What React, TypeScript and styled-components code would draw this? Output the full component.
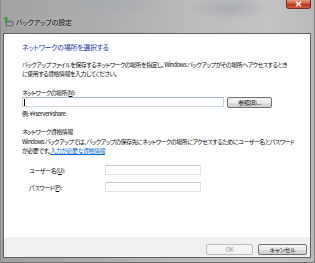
import * as React from "react";
import styled, { createGlobalStyle } from "styled-components";

const GlobalStyle = createGlobalStyle`
  html, body {
    margin: 0;
    padding: 0;
  }
  body {
    width: 315px;
    height: 263px;
    overflow: hidden;
    font-family: "Noto Sans CJK JP", "Noto Sans", sans-serif;
    font-feature-settings: "palt";
    color: #0c0c0c;
  }
`;

const Window = styled.div`
  width: 315px;
  height: 263px;
  box-sizing: border-box;
  display: flex;
  flex-direction: column;
  padding: 0 4px 5px 3px;
  background:
    radial-gradient(ellipse 60px 14px at 110px 4px, rgba(150, 160, 175, 0.35), transparent),
    radial-gradient(ellipse 40px 12px at 230px 8px, rgba(120, 130, 150, 0.3), transparent),
    linear-gradient(to right, #a2a2a2 0%, #acacac 30%, #bababa 60%, #c3c3c3 85%, #b9b9b9 100%);
  box-shadow: inset 1px 0 0 #8a8a8a, inset -1px 0 0 #7d7d7d, inset 0 -1px 0 #6e6e6e;
`;

const TitleBar = styled.div`
  height: 33px;
  display: flex;
  align-items: flex-start;
  padding-left: 1px;
`;

const TitleLabel = styled.div`
  display: flex;
  align-items: center;
  gap: 2px;
  margin-top: 17px;
  font-size: 7px;
  line-height: 10px;
  letter-spacing: -0.2px;
  color: #0a0a0a;
  text-shadow: 0 0 4px rgba(255, 255, 255, 0.7);
`;

const CloseButton = styled.div`
  margin-left: auto;
  width: 25px;
  height: 9px;
  box-sizing: border-box;
  border: 1px solid #7a2a1c;
  border-top: none;
  border-radius: 0 0 3px 3px;
  background: linear-gradient(#e39a86 0%, #cf5a3e 45%, #b8341c 55%, #d45c3e 100%);
  display: flex;
  align-items: center;
  justify-content: center;
`;

const Client = styled.div`
  flex: 1;
  display: flex;
  flex-direction: column;
  border: 1px solid #5f5f5f;
`;

const Body = styled.div`
  flex: 1;
  background: #ffffff;
  padding: 8px 0 0 18px;
  display: flex;
  flex-direction: column;
`;

const Heading = styled.div`
  font-size: 7px;
  line-height: 10px;
  letter-spacing: -0.3px;
  color: #1c3c9c;
`;

const Text = styled.div<{ $top?: number }>`
  font-size: 6px;
  line-height: 9px;
  letter-spacing: -0.5px;
  margin-top: ${(p) => p.$top ?? 0}px;
  white-space: nowrap;
`;

const Key = styled.span`
  text-decoration: underline;
`;

const Link = styled.a`
  color: #0066cc;
  text-decoration: underline;
`;

const LocationRow = styled.div`
  display: flex;
  align-items: center;
  gap: 3px;
  height: 10px;
`;

const Field = styled.div<{ $width: number; $focused?: boolean }>`
  width: ${(p) => p.$width}px;
  height: 10px;
  box-sizing: border-box;
  background: #ffffff;
  border: 1px solid ${(p) => (p.$focused ? "#c5d5e6" : "#dfe3e8")};
  border-top-color: ${(p) => (p.$focused ? "#a9b8cc" : "#c3c8ce")};
  display: flex;
  align-items: center;
  padding-left: 1px;
`;

const Caret = styled.span`
  width: 1px;
  height: 7px;
  background: #000000;
`;

const Button = styled.div<{ $width: number; $disabled?: boolean }>`
  width: ${(p) => p.$width}px;
  height: 11px;
  box-sizing: border-box;
  border: 1px solid ${(p) => (p.$disabled ? "#b8bcc0" : "#707070")};
  border-radius: 2px;
  background: ${(p) =>
    p.$disabled
      ? "#f4f4f4"
      : "linear-gradient(#f3f3f3 0%, #ebebeb 50%, #dddddd 51%, #cfcfcf 100%)"};
  color: ${(p) => (p.$disabled ? "#9a9a9a" : "#0c0c0c")};
  font-size: 6px;
  line-height: 9px;
  letter-spacing: -0.3px;
  display: flex;
  align-items: center;
  justify-content: center;
`;

const CredGrid = styled.div`
  display: grid;
  grid-template-columns: 76px 96px;
  row-gap: 7px;
  align-items: center;
  margin-top: 10px;
  padding-left: 7px;
`;

const FieldLabel = styled.div`
  font-size: 6px;
  line-height: 9px;
  letter-spacing: -0.4px;
  white-space: nowrap;
`;

const Footer = styled.div`
  height: 20px;
  background: #f0f0f0;
  display: flex;
  justify-content: flex-end;
  align-items: flex-start;
  gap: 5px;
  padding: 7px 3px 0 0;
  box-sizing: border-box;
`;

function BackupIcon() {
  return (
    <svg width="10" height="10" viewBox="0 0 10 10">
      <rect x="2" y="4" width="7" height="5" rx="1" fill="#7c8590" stroke="#4a525c" strokeWidth="0.6" />
      <rect x="3" y="6.5" width="5" height="1" fill="#c9d0d8" />
      <path d="M1 5 L1 1.5 L0 1.5 L2 0 L4 1.5 L3 1.5 L3 5 Z" fill="#3fae2a" stroke="#2a7a1c" strokeWidth="0.4" />
    </svg>
  );
}

export default function App() {
  return (
    <>
      <GlobalStyle />
      <Window>
        <TitleBar>
          <TitleLabel>
            <BackupIcon />
            <span>バックアップの設定</span>
          </TitleLabel>
          <CloseButton>
            <svg width="7" height="6" viewBox="0 0 7 6">
              <path d="M1 0.8 L6 5.2 M6 0.8 L1 5.2" stroke="#ffffff" strokeWidth="1.4" />
            </svg>
          </CloseButton>
        </TitleBar>
        <Client>
          <Body>
            <Heading>ネットワークの場所を選択する</Heading>
            <Text $top={8}>
              バックアップ ファイルを保存するネットワークの場所を指定し、Windows バックアップがその場所へアクセスするとき
            </Text>
            <Text>に使用する資格情報を入力してください。</Text>
            <Text $top={10}>
              ネットワークの場所(<Key>N</Key>):
            </Text>
            <LocationRow>
              <Field $width={202} $focused>
                <Caret />
              </Field>
              <Button $width={45}>参照(B)...</Button>
            </LocationRow>
            <Text $top={2}>例: ¥¥server¥share</Text>
            <Text $top={9}>ネットワーク資格情報</Text>
            <Text $top={1}>
              Windows バックアップでは、バックアップの保存先にネットワークの場所にアクセスするためにユーザー名とパスワード
            </Text>
            <Text>
              が必要です。<Link>入力が必要な資格情報</Link>
            </Text>
            <CredGrid>
              <FieldLabel>
                ユーザー名(<Key>U</Key>):
              </FieldLabel>
              <Field $width={96} />
              <FieldLabel>
                パスワード(<Key>P</Key>):
              </FieldLabel>
              <Field $width={96} />
            </CredGrid>
          </Body>
          <Footer>
            <Button $width={47} $disabled>
              OK
            </Button>
            <Button $width={49}>キャンセル</Button>
          </Footer>
        </Client>
      </Window>
    </>
  );
}
